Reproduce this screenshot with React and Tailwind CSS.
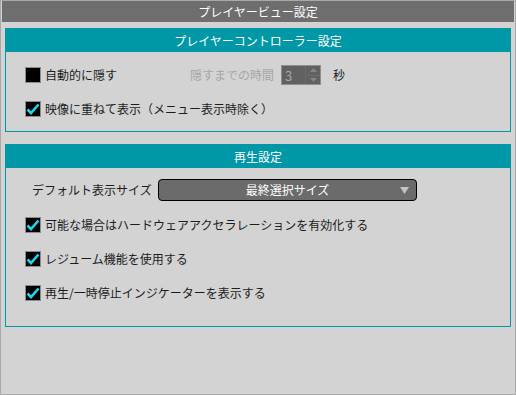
import React from "react";

const FONT = { fontFamily: '"Noto Sans CJK JP", "Noto Sans", sans-serif' };

const CheckBox = ({ checked, label }) => (
  <div className="flex items-center h-[20px]">
    <div className="w-[16px] h-[16px] border border-[#8c8c8c] bg-black flex items-center justify-center">
      {checked && (
        <svg width="14" height="14" viewBox="0 0 14 14">
          <path d="M1.5 7.5 L5 11 L12.5 2.5" fill="none" stroke="#1ed4f2" strokeWidth="2.6" />
        </svg>
      )}
    </div>
    <span className="ml-[4px] text-[12px] text-[#1c1c1c] leading-none">{label}</span>
  </div>
);

const Section = ({ title, height, children }) => (
  <div className={`border border-[#0097a7] flex flex-col ${height}`}>
    <div className="h-[23px] bg-[#0097a7] text-white text-[12px] flex items-center justify-center leading-none">
      {title}
    </div>
    {children}
  </div>
);

export default function App() {
  return (
    <div style={FONT} className="w-[516px] h-[395px] border border-[#a8a8a8] bg-[#d3d3d3] flex flex-col">
      <div className="mx-[1px] h-[21px] bg-[#6e6e6e] text-white text-[12px] flex items-center justify-center leading-none">
        プレイヤービュー設定
      </div>

      <div className="px-[4px] pt-[6px] flex flex-col gap-[12px]">
        <Section title="プレイヤーコントローラー設定" height="h-[104px]">
          <div className="pl-[19px] pt-[13px] flex flex-col gap-[14px]">
            <div className="flex items-center h-[20px]">
              <div className="w-[165px]">
                <CheckBox checked={false} label="自動的に隠す" />
              </div>
              <span className="text-[12px] text-[#a6a6a6] leading-none">隠すまでの時間</span>
              <div className="ml-[7px] w-[40px] h-[20px] bg-[#616161] border border-[#8e8e8e] flex">
                <div className="flex-1 text-[13px] text-[#a9a9a9] pl-[3px] flex items-center leading-none">3</div>
                <div className="w-[15px] flex flex-col border-l border-[#6c6c6c]">
                  <div className="flex-1 flex items-center justify-center border-b border-[#6c6c6c]">
                    <svg width="7" height="4" viewBox="0 0 7 4"><path d="M0 4 L3.5 0 L7 4 Z" fill="#858585" /></svg>
                  </div>
                  <div className="flex-1 flex items-center justify-center">
                    <svg width="7" height="4" viewBox="0 0 7 4"><path d="M0 0 L3.5 4 L7 0 Z" fill="#858585" /></svg>
                  </div>
                </div>
              </div>
              <span className="ml-[12px] text-[12px] text-[#1c1c1c] leading-none">秒</span>
            </div>
            <CheckBox checked label="映像に重ねて表示（メニュー表示時除く）" />
          </div>
        </Section>

        <Section title="再生設定" height="h-[183px]">
          <div className="pt-[11px] flex flex-col">
            <div className="flex items-center h-[22px] pl-[26px]">
              <span className="w-[126px] text-[12px] text-[#1c1c1c] leading-none">デフォルト表示サイズ</span>
              <div className="w-[259px] h-[22px] bg-[#6b6b6b] border border-black rounded-[4px] flex items-center relative">
                <span className="flex-1 text-center text-white text-[12px] leading-none">最終選択サイズ</span>
                <svg className="absolute right-[7px] top-[7px]" width="9" height="7" viewBox="0 0 9 7">
                  <path d="M0 0 L9 0 L4.5 7 Z" fill="#c4c4c4" />
                </svg>
              </div>
            </div>
            <div className="pl-[19px] pt-[14px] flex flex-col gap-[14px]">
              <CheckBox checked label="可能な場合はハードウェアアクセラレーションを有効化する" />
              <CheckBox checked label="レジューム機能を使用する" />
              <CheckBox checked label="再生/一時停止インジケーターを表示する" />
            </div>
          </div>
        </Section>
      </div>
    </div>
  );
}
